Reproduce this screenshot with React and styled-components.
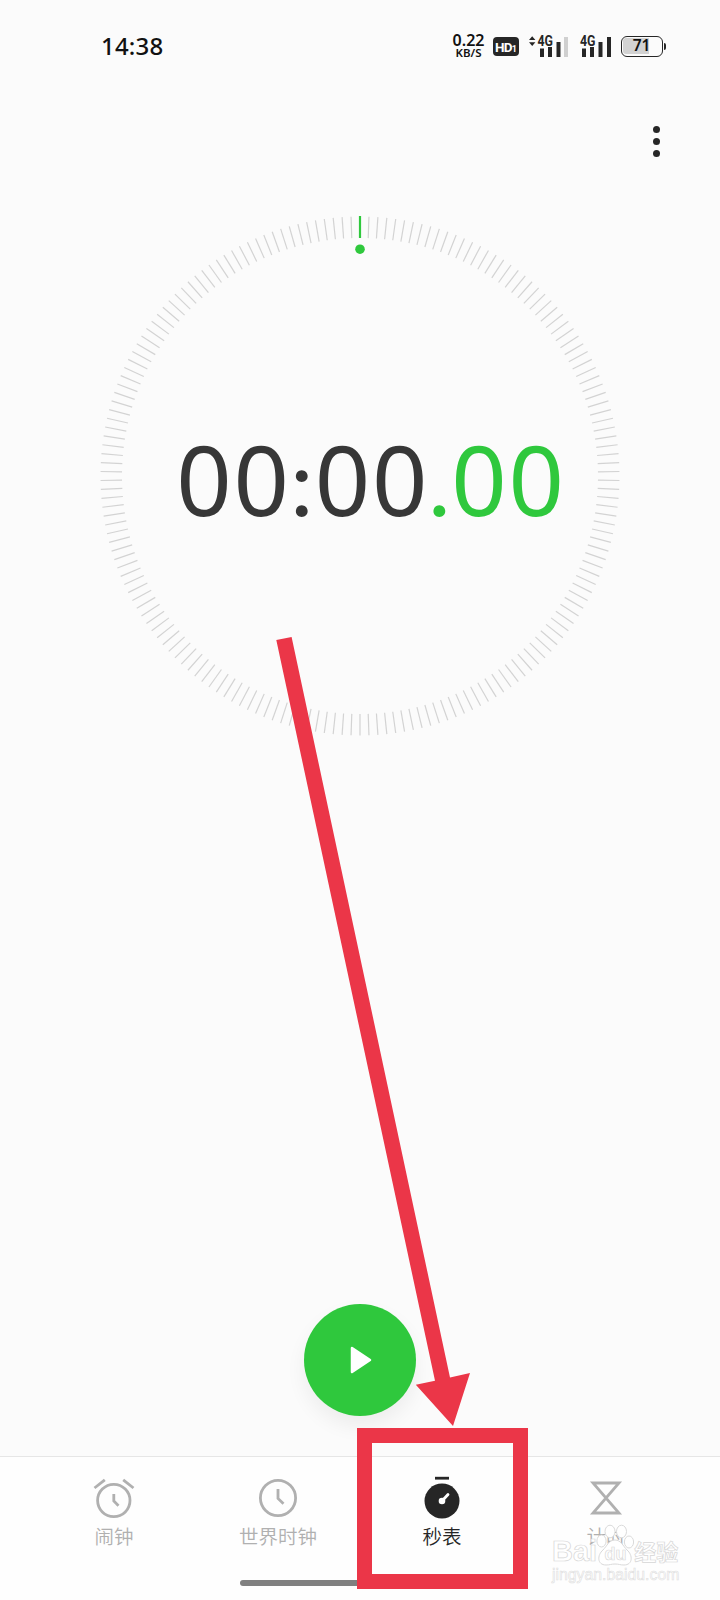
import React from 'react';
import styled, {createGlobalStyle} from 'styled-components';

const GREEN = '#2fc83d';
const RED = '#eb3648';
const DARK = '#262626';
const GREY = '#b0b0b0';

const GlobalStyle = createGlobalStyle`
  body {
    margin: 0;
    background: #fbfbfb;
    font-family: "Noto Sans", "Noto Sans CJK SC", sans-serif;
  }
`;

const Screen = styled.div`
  position: relative;
  display: flex;
  flex-direction: column;
  width: 720px;
  height: 1600px;
  overflow: hidden;
  background: #fbfbfb;
`;

const StatusBar = styled.header`
  display: flex;
  justify-content: space-between;
  align-items: center;
  box-sizing: border-box;
  height: 92px;
  padding: 0 54.5px 0 101px;
  color: #111;
`;

const Time = styled.div`
  font-size: 24px;
  font-weight: 500;
  line-height: 30px;
  letter-spacing: 0.2px;
`;

const StatusIcons = styled.div`
  display: flex;
  align-items: center;
`;

const Speed = styled.div`
  display: flex;
  flex-direction: column;
  align-items: center;
  width: 32px;
  margin-right: 8px;
  font-weight: 600;
  white-space: nowrap;
`;

const SpeedValue = styled.span`
  font-size: 16px;
  line-height: 13px;
`;

const SpeedUnit = styled.span`
  font-size: 11.5px;
  line-height: 12px;
`;

const HdBadge = styled.div`
  display: flex;
  align-items: baseline;
  justify-content: center;
  width: 26px;
  height: 19px;
  margin-right: 10px;
  border-radius: 4px;
  background: ${DARK};
  color: #fff;
  font-family: Roboto, sans-serif;
  font-size: 13.5px;
  font-weight: 700;
  line-height: 20px;
  letter-spacing: -0.8px;
`;

const HdIndex = styled.span`
  font-size: 9px;
`;

const Signal = styled.svg`
  display: block;
  width: ${props => props.$width}px;
  height: 22px;
  margin-right: ${props => props.$gap}px;
  overflow: visible;
  text {
    font: 700 14px Roboto, sans-serif;
    fill: ${DARK};
    stroke: #fbfbfb;
    stroke-width: 1.2px;
    paint-order: stroke;
  }
`;

const Battery = styled.div`
  box-sizing: border-box;
  width: 42px;
  height: 21px;
  padding: 1.5px;
  border: 1.7px solid ${DARK};
  border-radius: 6px;
`;

const BatteryLevel = styled.div`
  height: 100%;
  border-radius: 3px;
  background: linear-gradient(to right, #d2d2d2 71%, transparent 71%);
  color: #111;
  font-size: 15.5px;
  font-weight: 600;
  line-height: 15px;
  text-align: center;
`;

const BatteryTip = styled.div`
  width: 2px;
  height: 7px;
  margin-left: 1px;
  border-radius: 0 2px 2px 0;
  background: ${DARK};
`;

const Toolbar = styled.div`
  display: flex;
  justify-content: flex-end;
  align-items: center;
  height: 99px;
  padding-right: 60.5px;
`;

const MenuButton = styled.button`
  display: flex;
  flex-direction: column;
  gap: 5.3px;
  padding: 0;
  border: 0;
  background: none;
`;

const Dot = styled.span`
  width: 7px;
  height: 7px;
  border-radius: 50%;
  background: ${DARK};
`;

const DialArea = styled.div`
  display: grid;
  justify-items: center;
  align-items: center;
  height: 522px;
  margin-top: 23.5px;
  > * {
    grid-area: 1 / 1;
  }
`;

const DialSvg = styled.svg`
  width: 522px;
  height: 522px;
`;

const Timer = styled.div`
  padding: 6px 0 0 22px;
  color: #373737;
  font-size: 97px;
  line-height: 132px;
  letter-spacing: 1.8px;
  white-space: nowrap;
`;

const Fraction = styled.span`
  color: ${GREEN};
`;

// Lato has the round dots, Noto Sans has the narrow zeros
const Separator = styled.span`
  display: inline-block;
  width: ${props => props.$width}px;
  font-family: Lato, sans-serif;
  font-size: 94px;
  letter-spacing: 0;
  text-align: center;
  text-indent: -2px;
`;

const Controls = styled.div`
  display: flex;
  flex: 1;
  justify-content: center;
  align-items: flex-end;
  padding-bottom: 40px;
`;

const PlayButton = styled.button`
  display: flex;
  justify-content: center;
  align-items: center;
  width: 112px;
  height: 112px;
  padding: 0;
  border: 0;
  border-radius: 50%;
  background: ${GREEN};
  box-shadow: 0 10px 20px rgba(0, 0, 0, 0.06);
`;

const TabBar = styled.nav`
  display: flex;
  box-sizing: border-box;
  height: 144px;
  padding: 19px 32px 0;
  border-top: 1px solid #e6e6e6;
  background: #fefefe;
`;

const Tab = styled.div`
  display: flex;
  flex: 1;
  flex-direction: column;
  align-items: center;
  color: ${props => (props.$active ? DARK : GREY)};
  font-family: "Noto Sans CJK SC", sans-serif;
  font-size: 19.5px;
  font-weight: 350;
  line-height: 28px;
`;

const TabIcon = styled.svg`
  width: 44px;
  height: 44px;
  margin-bottom: 2px;
  fill: none;
  stroke: currentColor;
  stroke-width: 2.8;
`;

const HomeBar = styled.div`
  position: absolute;
  left: 240px;
  bottom: 14px;
  width: 240px;
  height: 6px;
  border-radius: 3px;
  background: #808080;
`;

const Highlight = styled.div`
  position: absolute;
  left: 357px;
  top: 1428px;
  box-sizing: border-box;
  width: 171px;
  height: 161px;
  border: 15px solid ${RED};
`;

const Overlay = styled.svg`
  position: absolute;
  left: 0;
  top: 0;
  pointer-events: none;
`;

const Watermark = styled.div`
  position: absolute;
  left: 552px;
  top: 1520px;
  width: 132px;
  color: #fff;
  -webkit-text-stroke: 0.7px #d6d6d6;
`;

const Brand = styled.div`
  display: flex;
  align-items: flex-end;
  height: 46px;
  font-family: "Liberation Sans", "Noto Sans CJK SC", sans-serif;
  font-size: 29px;
  font-weight: 700;
  line-height: 30px;
  white-space: nowrap;
`;

const BrandCn = styled.span`
  font-family: "Noto Sans CJK SC", sans-serif;
  font-size: 22px;
  line-height: 31px;
`;

const Paw = styled.svg`
  width: 38px;
  height: 44px;
  margin-left: -1px;
  fill: #fff;
  stroke: #dadada;
  text {
    font: 700 18px "Liberation Sans", sans-serif;
    -webkit-text-stroke: 0;
    stroke-width: 0.7;
  }
`;

const Site = styled.div`
  font-family: "Liberation Sans", sans-serif;
  font-size: 15.8px;
  line-height: 17px;
  -webkit-text-stroke: 0.6px #dedede;
`;

const TICKS = 182;

const Dial = () => (
  <DialSvg viewBox="-261 -261 522 522">
    {Array.from({length: TICKS - 1}, (_, i) => (
      <line key={i} y1="-259.5" y2="-238" stroke="#d3d3d3" strokeWidth="1.2"
            transform={`rotate(${((i + 1) * 360) / TICKS})`}/>
    ))}
    <line y1="-260" y2="-238" stroke={GREEN} strokeWidth="2.2"/>
    <circle cy="-226.8" r="4.8" fill={GREEN}/>
  </DialSvg>
);

const AlarmIcon = () => (
  <TabIcon viewBox="0 0 44 44">
    <circle cx="21.8" cy="24.5" r="16.2"/>
    <path d="M21.8 18v7l4.7 4.7M2.5 12L12.8 3.8M31.2 3.8L41.5 12"/>
  </TabIcon>
);

const WorldIcon = () => (
  <TabIcon viewBox="0 0 44 44">
    <circle cx="22" cy="22" r="17.6"/>
    <path d="M22 13v9.5l5.5 5.2"/>
  </TabIcon>
);

const StopwatchIcon = () => (
  <TabIcon viewBox="0 0 44 44">
    <circle cx="22" cy="25" r="17.5" fill="currentColor" stroke="none"/>
    <path d="M15 2.2h14"/>
    <circle cx="22" cy="25" r="3.3" fill="#fff" stroke="none"/>
    <path d="M22 25l6-6.5" stroke="#fff" strokeLinecap="round"/>
  </TabIcon>
);

const HourglassIcon = () => (
  <TabIcon viewBox="0 0 44 44">
    <path d="M9 7h26L9 37h26z"/>
  </TabIcon>
);

const tabs = [
  {label: '闹钟', Icon: AlarmIcon},
  {label: '世界时钟', Icon: WorldIcon},
  {label: '秒表', Icon: StopwatchIcon, active: true},
  {label: '计时', Icon: HourglassIcon},
];

const App = () => (
  <>
    <GlobalStyle/>
    <Screen>
      <StatusBar>
        <Time>14:38</Time>
        <StatusIcons>
          <Speed>
            <SpeedValue>0.22</SpeedValue>
            <SpeedUnit>KB/S</SpeedUnit>
          </Speed>
          <HdBadge>HD<HdIndex>1</HdIndex></HdBadge>
          <Signal $width={39} $gap={12} viewBox="0 0 39 22">
            <path d="M0 5L3.2 1.2L6.4 5zM0 7.2L3.2 11L6.4 7.2z" fill={DARK}/>
            <path d="M11 13.5h4v8.5h-4zM19 12h4v10h-4zM27.5 7h4v15h-4z" fill={DARK}/>
            <path d="M35 2h4v20h-4z" fill="#d0d0d0"/>
            <text x="8.5" y="10.8" textLength="15.5" lengthAdjust="spacingAndGlyphs">4G</text>
          </Signal>
          <Signal $width={31} $gap={10} viewBox="0 0 31 22">
            <path d="M2 13.5h4v8.5h-4zM10 12h4v10h-4zM18.5 7h4v15h-4zM27 2h4v20h-4z" fill={DARK}/>
            <text x="0" y="10.8" textLength="15.5" lengthAdjust="spacingAndGlyphs">4G</text>
          </Signal>
          <Battery>
            <BatteryLevel>71</BatteryLevel>
          </Battery>
          <BatteryTip/>
        </StatusIcons>
      </StatusBar>

      <Toolbar>
        <MenuButton aria-label="menu">
          <Dot/>
          <Dot/>
          <Dot/>
        </MenuButton>
      </Toolbar>

      <DialArea>
        <Dial/>
        <Timer>
          00<Separator $width={24}>:</Separator>00
          <Fraction><Separator $width={22}>.</Separator>00</Fraction>
        </Timer>
      </DialArea>

      <Controls>
        <PlayButton aria-label="start">
          <svg width="24" height="30" viewBox="0 0 24 30">
            <path d="M4 3L22 15L4 27z" fill="#fff" stroke="#fff" strokeWidth="2.5" strokeLinejoin="round"/>
          </svg>
        </PlayButton>
      </Controls>

      <TabBar>
        {tabs.map(({label, Icon, active}) => (
          <Tab key={label} $active={active}>
            <Icon/>
            {label}
          </Tab>
        ))}
      </TabBar>

      <HomeBar/>
      <Highlight/>
      <Overlay width="720" height="1600">
        <path d="M276.3 640L291.6 637L450 1377.5L470 1373L453 1426L415.8 1384.7L435 1380.7z" fill={RED}/>
      </Overlay>
      <Watermark>
        <Brand>
          Bai
          <Paw viewBox="0 0 38 44">
            <ellipse cx="5.5" cy="19" rx="4.6" ry="6"/>
            <ellipse cx="14" cy="9.5" rx="5" ry="6.3"/>
            <ellipse cx="25.5" cy="9.5" rx="5" ry="6.3"/>
            <ellipse cx="33" cy="20" rx="4.6" ry="6"/>
            <path d="M19 18c-6 0-8 6-12 10c-6 5-6 15 3 15c4 0 5-1 9-1s5 1 9 1c9 0 9-10 3-15c-4-4-6-10-12-10z"/>
            <text x="8.5" y="38">du</text>
          </Paw>
          <BrandCn>经验</BrandCn>
        </Brand>
        <Site>jingyan.baidu.com</Site>
      </Watermark>
    </Screen>
  </>
);

export default App;
